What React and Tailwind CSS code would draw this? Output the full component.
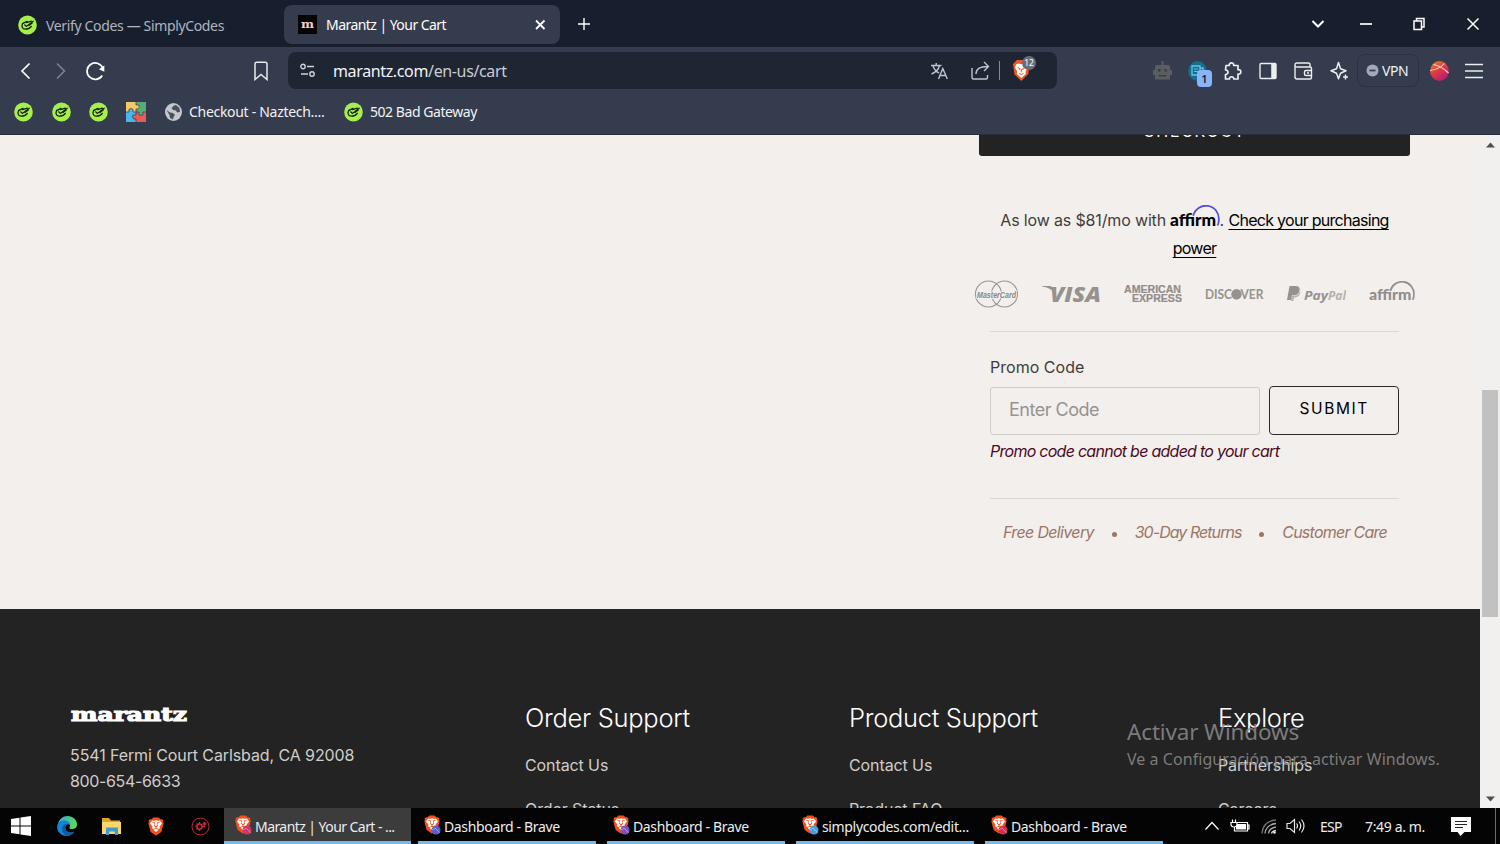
import React from 'react';
import { SiBrave } from 'react-icons/si';

const bookmarks = ['simplycodes-1', 'simplycodes-2', 'simplycodes-3'];

const tasks = [
  { title: 'Marantz | Your Cart - ...', dot: '#d6336c', active: true },
  { title: 'Dashboard - Brave', dot: '#5b5fc7' },
  { title: 'Dashboard - Brave', dot: '#8250c4' },
  { title: 'simplycodes.com/edit...', dot: '#4a9fe0' },
  { title: 'Dashboard - Brave', dot: '#d92c4f' },
];

const SimplyCodesIcon = () => (
  <svg className="w-[19px] h-5 shrink-0" viewBox="0 0 20 20" fill="none">
    <ellipse cx="10" cy="10" rx="9.8" ry="10" fill="#a6f04d" />
    <path d="M9.500 6.200 4.800 8.500c-1.500 3.800.2 6 3 5.900 3-.1 5-1 6.200-3" stroke="#16210c" strokeWidth="1.400" strokeLinecap="round" />
    <path d="m7 9.800 1.800 1.700L16 6M9 7.500l5-1.500M11.500 10.500l3.500-2.500" stroke="#16210c" strokeWidth="1.300" strokeLinecap="round" />
  </svg>
);

const BraveIcon = ({ dot }) => (
  <span className="relative block w-[18px] h-[19px] shrink-0">
    <svg className="absolute inset-0" width="18" height="19" viewBox="0 0 18 19">
      <path d="M4 3h10l1.500 4-1.500 7-5 4-5-4-1.500-7z" fill="#fff" />
    </svg>
    <SiBrave className="absolute inset-0 w-[18px] h-[19px] text-[#f4501e]" />
    {dot && (
      <svg className="absolute left-[8px] top-[10px]" width="10" height="10" viewBox="0 0 10 10">
        <circle cx="5" cy="5" r="4.500" fill={dot} />
        <path d="m1 5 3-2 5 5" stroke="#fff" strokeOpacity=".5" strokeWidth=".8" fill="none" />
      </svg>
    )}
  </span>
);

const AffirmLogo = ({ className, color, arc }) => (
  <svg className={className} viewBox="0 0 50 26">
    <text x="0" y="21" fontFamily="Lato" fontWeight="900" fontSize="17" textLength="46" lengthAdjust="spacingAndGlyphs" fill={color}>affirm</text>
    <path d="M23.200 10.800A13 13 0 0 1 48.800 15q0 3.500-1.300 5.500" fill="none" stroke={arc} strokeWidth="1.800" />
  </svg>
);

const TabStrip = () => (
  <div className="h-[47px] bg-[#171f2f] flex items-center text-[#fff]">
    <div className="flex items-center w-[284px] pl-[18px] pt-[3px] gap-[9px]">
      <SimplyCodesIcon />
      <span className="text-[14px] tracking-[-0.35px] text-[#b0b5be]">Verify Codes — SimplyCodes</span>
    </div>
    <div className="flex items-center w-[276px] h-[39px] mt-px rounded-lg bg-[#343c4d] pl-3.5 pr-[13px]">
      <svg className="w-[19px] h-[19px]" viewBox="0 0 19 19">
        <rect width="19" height="19" fill="#050303" />
        <text x="9.500" y="13" textAnchor="middle" fontFamily="DejaVu Serif" fontWeight="700" fontSize="11" textLength="13" lengthAdjust="spacingAndGlyphs" fill="#eed4c8">m</text>
      </svg>
      <span className="ml-[9px] mt-px text-[14px] tracking-[-0.55px]">Marantz | Your Cart</span>
      <svg className="ml-auto" width="13" height="13" viewBox="0 0 13 13" stroke="#fff" strokeWidth="1.800"><path d="m2 2.500 8.500 8.500m0-8.500L2 11" /></svg>
    </div>
    <svg className="ml-[17px]" width="14" height="14" viewBox="0 0 14 14" stroke="#fff" strokeWidth="1.400"><path d="M7 1v12M1 7h12" /></svg>
    <div className="ml-auto flex items-center">
      <svg width="14" height="10" viewBox="0 0 14 10" stroke="#fff" strokeWidth="2" fill="none"><path d="m1.500 2 5.500 5.500L12.500 2" /></svg>
      <svg className="ml-[34px]" width="14" height="10" viewBox="0 0 14 10" stroke="#fff" strokeWidth="1.700"><path d="M1 5h12" /></svg>
      <svg className="ml-[39px]" width="14" height="14" viewBox="0 0 14 14" stroke="#fff" strokeWidth="1.500" fill="none"><path d="M2 4h7.500v8.500H2zM4.500 3.800V1.500H12V10H9.800" /></svg>
      <svg className="ml-[40px] mr-5" width="14" height="14" viewBox="0 0 14 14" stroke="#fff" strokeWidth="1.500"><path d="m1.500 1.500 11 11m0-11-11 11" /></svg>
    </div>
  </div>
);

const AddressBar = () => (
  <div className="flex items-center w-[769px] h-[37px] ml-[20px] rounded-lg bg-[#1e2533] text-[#c9cdd4]">
    <svg className="ml-3" width="15" height="15" viewBox="0 0 15 15" fill="none" stroke="#cfd3da" strokeWidth="1.400">
      <circle cx="3" cy="3.500" r="2.200" /><path d="M7 3.500h7M1 11h7" /><circle cx="12" cy="11" r="2.200" />
    </svg>
    <span className="ml-[18px] text-base tracking-[-0.36px]"><span className="text-[#f3f4f6]">marantz.com</span>/en-us/cart</span>
    <svg className="ml-auto" width="19" height="18" viewBox="0 0 19 18" fill="none" stroke="#c0c5cd" strokeWidth="1.400">
      <path d="M1 3.500h10.500M6.200 1v2.500M3 3.500c1 4 3 6 6 7.500M9.500 3.500C8.500 8 5 10.500 1.500 12M8.500 17l4.300-10.500L17.300 17M10 13.500h5.800" />
    </svg>
    <svg className="ml-[22px]" width="19" height="19" viewBox="0 0 19 19" fill="none" stroke="#c0c5cd" strokeWidth="1.400">
      <path d="M1 7v9.500q0 1.500 1.500 1.500H15q1.500 0 1.500-1.500V14M5 13c0-5 3.500-7.500 12-7.500M13 1l4.500 4.500L13 10" />
    </svg>
    <span className="w-px h-[19px] ml-[9px] bg-[#858a94]" />
    <span className="relative ml-[12px] mr-[25px]">
      <svg width="20" height="23" viewBox="0 0 20 23">
        <path d="M5 1h8l4.500 4-1.200 10L9.300 22 2.500 15.500 1 5z" fill="#f4561f" />
        <path d="m4 5.500 2.500-1 2.800.8 2.800-.8 2.600 1 1 3-2 3.500v3l-4.400 4L5 15v-3L3 8.500z" fill="#fff" />
        <path d="m5.500 8.500 2.500 1-.5 1.500M13.200 8.500l-2.500 1 .5 1.500M7 14.500l2.300 1 2.300-1M9.300 10v3.500" stroke="#e8582a" strokeWidth="1" fill="none" />
      </svg>
      <span className="absolute -top-[3px] left-[10px] w-[14px] h-[14px] rounded-full bg-[#686d79] text-[#fff] text-[8.500px] leading-[14px] text-center">12</span>
    </span>
  </div>
);

const Toolbar = () => (
  <div className="h-[47px] flex items-center bg-[#343c4d]">
    <svg className="ml-[20px]" width="12" height="18" viewBox="0 0 12 18" fill="none" stroke="#fff" strokeWidth="1.700"><path d="M9.500 1.500 2 9l7.500 7.500" /></svg>
    <svg className="ml-[23px]" width="12" height="18" viewBox="0 0 12 18" fill="none" stroke="#7d8491" strokeWidth="1.600"><path d="M2 1.500 9.500 9 2 16.500" /></svg>
    <svg className="ml-[18px]" width="21" height="20" viewBox="0 0 21 20" fill="none" stroke="#fff" strokeWidth="1.700">
      <path d="M17.200 14.500A8.200 8.200 0 1 1 18 7.500" /><path d="M14 8.300 19.300 4.500v6.200z" fill="#fff" stroke="none" />
    </svg>
    <svg className="ml-[148px]" width="14" height="20" viewBox="0 0 14 20" fill="none" stroke="#e8eaed" strokeWidth="1.500"><path d="M1 3q0-1.800 1.800-1.800h8.400Q13 1.200 13 3v15.500l-6-5-6 5z" /></svg>
    <AddressBar />
    <svg className="ml-[95px]" width="21" height="21" viewBox="0 0 21 21" fill="#5b5d60">
      <path d="M9.500 1h2v4H16q2 0 2 2v3h2v5h-2v4.500H3V15H1v-5h2V7q0-2 2-2h4.500z" />
      <path d="M6 9h2.500v2.500H6zM12.500 9H15v2.500h-2.500zM6.500 15h8v1.500h-8z" fill="#343c4d" />
    </svg>
    <span className="relative ml-[15px] w-[26px]">
      <svg width="19" height="20" viewBox="0 0 19 20">
        <ellipse cx="9.500" cy="10" rx="9.300" ry="10" fill="#156d92" />
        <path d="M4 5h8v9H4zM12 7h3v6" fill="none" stroke="#64c6dd" strokeWidth="1.300" /><path d="M6 8h4M6 10.500h4" stroke="#64c6dd" />
      </svg>
      <span className="absolute left-[9px] top-[9px] w-[15px] h-[17px] rounded bg-[#8ab4f8] text-[#17202e] text-[11px] font-semibold leading-[18px] text-center">1</span>
    </span>
    <svg className="ml-[9px]" width="19" height="20" viewBox="0 0 19 20" fill="none" stroke="#eceef1" strokeWidth="1.700" strokeLinejoin="round">
      <path d="M3 4.500h3.300C5.500 1 11.500 1 10.700 4.500H15v4.200c3.800-.6 3.800 5 0 4.400V18h-4.200c.2-3-4.600-3-4.400 0H2.500v-4.500c3.300 0 3.300-4.600 0-4.500z" />
    </svg>
    <svg className="ml-[17px]" width="18" height="18" viewBox="0 0 18 18" fill="none" stroke="#eceef1" strokeWidth="1.400"><rect x="1" y="1.500" width="16" height="15" rx="1" /><path d="M12.200 2H17v14h-4.800z" fill="#eceef1" stroke="none" /></svg>
    <svg className="ml-[17px]" width="19" height="18" viewBox="0 0 19 18" fill="none" stroke="#eceef1" strokeWidth="1.400"><path d="M16 5V2.500Q16 1 14.500 1H3Q1 1 1 3v12q0 2 2 2h13q1.500 0 1.500-1.500v-9Q17.500 5 16 5H3Q1.200 5 1 3.500M17.500 8.500H12q-1.500 0-1.500 1.500v2q0 1.500 1.500 1.500h5.500M13 11h2" /></svg>
    <svg className="ml-[17px]" width="19" height="20" viewBox="0 0 19 20" fill="none" stroke="#eceef1" strokeWidth="1.500" strokeLinejoin="round"><path d="M8.500 1.500 10.500 7.700l5.500 2-5.500 2.500-2 5.600-2-5.600L1 9.700l5.500-2z" /><path d="M15.500 13.500v5M13 16h5" /></svg>
    <div className="ml-[8px] w-[62px] h-[33px] flex items-center rounded-lg border border-[#2a3140] pl-2 text-[14px] text-[#f0f1f4]">
      <svg width="13" height="13" viewBox="0 0 13 13"><circle cx="6.500" cy="6.500" r="6" fill="#a2a9b8" /><path d="M3.500 6.500h6" stroke="#343c4d" strokeWidth="1.700" /></svg>
      <span className="ml-[3px] tracking-[-0.4px]">VPN</span>
    </div>
    <svg className="ml-[11px]" width="19" height="20" viewBox="0 0 19 20">
      <defs><linearGradient id="avatar" x1="0" y1="0" x2=".7" y2="1"><stop offset="0" stopColor="#f08a24" /><stop offset=".5" stopColor="#e23b40" /><stop offset="1" stopColor="#b31a78" /></linearGradient></defs>
      <ellipse cx="9.500" cy="10" rx="9.400" ry="10" fill="url(#avatar)" />
      <path d="M0 9.500Q9 8.500 14.500 2.500M3.500 3.500Q12 5.500 18.500 12" stroke="#f4d5d5" strokeWidth="1.100" fill="none" />
    </svg>
    <svg className="ml-[16px]" width="18" height="16" viewBox="0 0 18 16" stroke="#eceef1" strokeWidth="1.700"><path d="M0 1.500h18M0 8h18M0 14.500h18" /></svg>
  </div>
);

const BookmarksBar = () => (
  <div className="h-[41px] pb-[5px] pl-[14px] flex items-center bg-[#343c4d] text-[14px] text-[#f2f3f5] border-b border-[#272d39] whitespace-nowrap">
    <div className="flex gap-[18.500px]">
      {bookmarks.map((b) => <SimplyCodesIcon key={b} />)}
    </div>
    <svg className="ml-[18px]" width="20" height="20" viewBox="0 0 20 20">
      <path d="M0 0h10v10H0z" fill="#f4c86a" /><path d="M10 0h10v10H10z" fill="#53ae7c" />
      <path d="M0 10h10v10H0z" fill="#48b8f0" /><path d="M10 10h10v10H10z" fill="#e75b5b" />
      <circle cx="11" cy="5" r="2.300" fill="#f4c86a" /><circle cx="15" cy="11" r="2.300" fill="#53ae7c" />
      <circle cx="5" cy="9" r="2.300" fill="#48b8f0" /><circle cx="9" cy="15" r="2.300" fill="#e75b5b" />
      <path d="M10 0v3q4-1 3 2.500Q12 8 10 7v3H7Q8 6.500 5 6.500T3 10H0M10 10h3q-1 3.500 2 3.500T17 10h3M10 10v3q-4-1-3.500 2T10 17v3" fill="none" stroke="#3d4047" strokeWidth=".8" />
    </svg>
    <svg className="ml-[19px]" width="17" height="18" viewBox="0 0 17 18">
      <ellipse cx="8.500" cy="9" rx="8.500" ry="9" fill="#c5c8ce" />
      <path d="M9 2.500 6.500 5l1.500 2 3 .5 1 2 3-.5-.5-4L11 2zM1.500 7 5 9.500l3 .5 2 2-1.500 2-.5 2.500-3-1.500-.5-3z" fill="#4a505c" />
    </svg>
    <span className="ml-[7px] w-[137px] tracking-[-0.3px]">Checkout - Naztech....</span>
    <span className="ml-[18px]"><SimplyCodesIcon /></span>
    <span className="ml-[7px] tracking-[-0.45px]">502 Bad Gateway</span>
  </div>
);

const PaymentLogos = () => (
  <div className="w-[440px] -ml-[4px] h-[30px] flex items-center justify-between">
    <svg width="43" height="28" viewBox="0 0 43 28" fill="none" stroke="#999592" strokeWidth="1.100">
      <circle cx="13.500" cy="14" r="13" /><circle cx="29.500" cy="14" r="13" />
      <text x="2" y="17.500" stroke="#f3efec" strokeWidth="2" paintOrder="stroke" fill="#8b8784" fontFamily="Liberation Sans" fontStyle="italic" fontWeight="700" fontSize="9.500" textLength="39" lengthAdjust="spacingAndGlyphs">MasterCard</text>
    </svg>
    <svg className="ml-px" width="59" height="18" viewBox="0 0 59 18" fill="#96928f">
      <path d="M0 1h8q2 0 2.500 2l1.500 5Q9 2.800 0 1.600z" />
      <text x="8" y="16.500" fontFamily="Open Sans" fontStyle="italic" fontWeight="800" fontSize="21.500" textLength="51" lengthAdjust="spacingAndGlyphs">VISA</text>
    </svg>
    <svg width="59" height="18" viewBox="0 0 59 18" fill="#918d8a" stroke="#918d8a" strokeWidth=".2" fontFamily="Liberation Sans" fontWeight="700" fontSize="10">
      <text x="0" y="8" textLength="57" lengthAdjust="spacingAndGlyphs">AMERICAN</text>
      <text x="8" y="16.500" textLength="50" lengthAdjust="spacingAndGlyphs">EXPRESS</text>
    </svg>
    <svg width="59" height="14" viewBox="0 0 59 14" fill="#96928f" fontFamily="Lato" fontWeight="700" fontSize="13.500">
      <text x="0" y="12" textLength="27" lengthAdjust="spacingAndGlyphs">DISC</text>
      <circle cx="31.500" cy="7.200" r="5.200" />
      <text x="35.500" y="12" textLength="23" lengthAdjust="spacingAndGlyphs">VER</text>
    </svg>
    <svg width="59" height="18" viewBox="0 0 59 18" fill="#96928f" fontFamily="Open Sans" fontStyle="italic" fontWeight="700" fontSize="12">
      <path d="M2.500 1h6q5 0 4 4.500T7.500 10H5l-1 5H0z" /><path d="m4 16 1.200-5.500h2.500q5 0 5.500-6 1 7.500-5.200 8H7L6.300 16z" opacity=".65" />
      <text x="17" y="14.500" textLength="24" lengthAdjust="spacingAndGlyphs">Pay</text>
      <text x="41" y="14.500" textLength="18" lengthAdjust="spacingAndGlyphs" opacity=".65">Pal</text>
    </svg>
    <AffirmLogo className="w-[46px] h-[24px] -mt-[3px]" color="#918d8a" arc="#918d8a" />
  </div>
);

const CartSummary = () => (
  <div className="ml-[979px] w-[431px] text-[#3f3d3c]">
    <div className="-mt-[29px] h-[50px] rounded-[3px] bg-[#232323] text-white text-base tracking-[1.700px] flex items-center justify-center">CHECKOUT</div>
    <p className="mt-[50px] h-[56px] text-center text-base leading-[28px]">
      <span className="tracking-[-0.150px]">As low as $81/mo with </span>
      <AffirmLogo className="inline-block align-baseline w-[50px] h-[26px] -mb-[5px] -mt-3" color="#000" arc="#5553d9" />
      <span className="-ml-px">. </span><a className="text-black underline underline-offset-[3px] decoration-1 tracking-[-0.720px]">Check your purchasing<br />power</a>
    </p>
    <div className="mt-[17px]"><PaymentLogos /></div>
    <div className="mx-[11px] mt-[22px] border-t border-[#dcd8d5]">
      <label className="block mt-[23px] h-6 leading-6 text-base tracking-[0.030px]">Promo Code</label>
      <div className="mt-[7px] flex items-center gap-[9px]">
        <div className="w-[271px] h-[48px] rounded-[3px] border border-[#d0ccc9] pl-[18px] leading-[44px] text-[18px] tracking-[-0.5px] text-[#979390]">Enter Code</div>
        <button className="w-[130px] h-[49px] pb-[3px] rounded border border-[#2b2b2b] text-[15.500px] tracking-[1.600px] text-black">SUBMIT</button>
      </div>
      <p className="mt-[4px] leading-6 text-base italic tracking-[-0.73px] text-[#4b0a26]">Promo code cannot be added to your cart</p>
    </div>
    <div className="mx-[11px] mt-[35px] border-t border-[#dcd8d5] pt-[21px] pl-[13px] pr-[12px] flex items-center justify-between leading-6 text-base italic tracking-[-0.75px] text-[#9b7566]">
      <span className="tracking-[-0.650px]">Free Delivery</span>
      <span className="size-[5px] mt-1 rounded-full bg-[#9b7566]" />
      <span className="tracking-[-0.950px]">30-Day Returns</span>
      <span className="size-[5px] mt-1 rounded-full bg-[#9b7566]" />
      <span>Customer Care</span>
    </div>
  </div>
);

const FooterColumn = ({ title, links, className }) => (
  <div className={className}>
    <h3 className="text-[25.500px] leading-8 font-light tracking-[-0.300px] text-[#fff]">{title}</h3>
    <ul className="mt-[19px] text-base tracking-[-0.1px] text-[#d0cdca]">
      {links.map((link) => <li key={link} className="h-[44px] leading-6">{link}</li>)}
    </ul>
  </div>
);

const Footer = () => (
  <footer className="h-[199px] bg-[#232323] pl-[70px] pt-[93px] flex overflow-hidden">
    <div className="w-[455px] shrink-0 text-[#d0cdca]">
      <svg className="mt-[5px]" width="119" height="18" viewBox="0 0 119 18">
        <text x="1" y="14" fontFamily="DejaVu Serif" fontWeight="700" fontSize="18" stroke="#fff" strokeWidth="1.100" fill="#fff" textLength="116" lengthAdjust="spacingAndGlyphs">marantz</text>
      </svg>
      <p className="mt-[17px] text-base leading-[26px] tracking-[-0.1px]">5541 Fermi Court Carlsbad, CA 92008<br /><span className="tracking-[-0.350px]">800-654-6633</span></p>
    </div>
    <FooterColumn className="w-[324px] shrink-0" title="Order Support" links={['Contact Us', 'Order Status']} />
    <FooterColumn className="w-[369px] shrink-0" title="Product Support" links={['Contact Us', 'Product FAQ']} />
    <FooterColumn className="shrink-0" title="Explore" links={['Partnerships', 'Careers']} />
  </footer>
);

const ScrollBar = () => (
  <div className="w-[20px] flex flex-col items-center bg-[#f1f0ef]">
    <svg className="mt-[7px]" width="9" height="6" viewBox="0 0 9 6"><path d="M0 5.500 4.500.5 9 5.500z" fill="#505050" /></svg>
    <div className="mt-[242px] w-4 h-[227px] bg-[#c1c1c1]" />
    <svg className="mt-auto mb-[6px]" width="9" height="6" viewBox="0 0 9 6"><path d="M0 .5h9L4.500 5.500z" fill="#505050" /></svg>
  </div>
);

const Taskbar = () => (
  <div className="relative z-10 h-[36px] flex items-center bg-[#040404] text-[#ededed] text-[14px]">
    <svg className="ml-[11px]" width="20" height="20" viewBox="0 0 20 20" fill="#fff"><path d="m0 3 8.500-1.200v7.700H0zM9.500 1.600 20 0v9.500H9.500zM0 10.500h8.500v7.700L0 17zM9.500 10.500H20V20l-10.500-1.600z" /></svg>
    <svg className="ml-[26px]" width="20" height="20" viewBox="0 0 20 20">
      <defs>
        <linearGradient id="edgeTop" x1="0" y1="0" x2="1" y2=".3"><stop offset="0" stopColor="#2aa8e8" /><stop offset="1" stopColor="#62d65b" /></linearGradient>
      </defs>
      <path d="M1 8C2 3 6 0 10.500 0 16 0 20 4 20 8.500c0 3-2 4.500-5 4.500-2 0-3-.8-2.500-1.800.7-1 .8-2.600-.3-4C9 3.500 3.500 4.500 1 8z" fill="url(#edgeTop)" />
      <path d="M.1 10C1 6 4.500 4.300 8 4.500c3 .2 5 2.200 5 4.500C10 7 7.500 10 8.500 13s5 4.500 9 2.500C15 19 12 20 9.500 20 4 20-.3 15.500.1 10z" fill="#1783d8" />
      <path d="M5.800 10c-1.500 4 0 8.500 4.500 9.900 3-.3 5.500-2 7.200-4.400-4 2-8.500.5-9-2.500C8 10.500 9 9 10 8.500 8.500 8 6.500 8.500 5.800 10z" fill="#1258a5" />
    </svg>
    <svg className="ml-[25px]" width="19" height="17" viewBox="0 0 19 17"><path d="M0 0h7l2 2.500h9V16H0z" fill="#e0a42d" /><path d="M0 4h19v12H0z" fill="#fbd668" /><path d="M4 17V9.500h12V17h-3.200v-3.500H7.200V17z" fill="#4297cf" /></svg>
    <span className="ml-[26px]"><BraveIcon /></span>
    <svg className="ml-[26px]" width="19" height="19" viewBox="0 0 19 19" fill="none" stroke="#c52a36" strokeWidth="1"><circle cx="9.500" cy="9.500" r="8.500" /><circle cx="8.500" cy="9.500" r="2.600" strokeWidth="1.500" /><path d="M8.500 5v2M8.500 12v2M4.500 9.500h1.500M5.500 6.500l1 1M5.500 12.500l1-1M11 9.500h2.500V6M11.800 7.500l1.700-2 1.700 2" strokeWidth="1.300" /></svg>
    <div className="ml-[14px] h-full flex gap-[11px]">
      {tasks.map((task, i) => (
        <div
          key={i}
          className={
            task.active
              ? 'w-[187px] -mr-[4px] h-full flex items-center pl-[10px] bg-[#3c3c3c] border-b-[3px] border-[#76b9ed] whitespace-nowrap tracking-[-0.560px]'
              : 'w-[178px] h-full flex items-center pl-[5px] border-b-[3px] border-[#76b9ed] whitespace-nowrap tracking-[-0.350px]'
          }
        >
          <BraveIcon dot={task.dot} />
          <span className="ml-[3px] mt-[3px]">{task.title}</span>
        </div>
      ))}
    </div>
    <svg className="ml-[41px]" width="16" height="10" viewBox="0 0 16 10" fill="none" stroke="#fff" strokeWidth="1.200"><path d="m1.500 8.500 6.500-7 6.500 7" /></svg>
    <svg className="ml-[10px]" width="20" height="15" viewBox="0 0 20 15" fill="none" stroke="#fff" strokeWidth="1.200"><path d="M6 3.500h11.500v8.500H4.500V8M17.500 6H19v4h-1.500" /><path d="M7 5h9v5.500H6V7z" fill="#fff" stroke="none" /><path d="M1 3.500h6V6Q6.500 8 4 8T1 6zM2.500 3.500v-3M5.500 3.500v-3" /></svg>
    <svg className="ml-[11px]" width="16" height="15" viewBox="0 0 16 15" fill="none" strokeWidth="1.300"><path d="M1 14.500Q2 2 15 1" stroke="#777" /><path d="M4 14.500Q5 5.500 15 4.500M7.500 14.500Q8 9 15 8" stroke="#aaa" /><path d="M10.500 14.500Q11 12 15 11.500" stroke="#ddd" /><circle cx="13.500" cy="13.500" r="1.200" fill="#fff" /></svg>
    <svg className="ml-[9px]" width="19" height="16" viewBox="0 0 19 16" fill="none" stroke="#e5e5e5" strokeWidth="1.200"><path d="M1 5.500h3L8.500 1.500v13L4 10.500H1zM10.500 5.500q2 2.500 0 5M13 3.500q3.500 4.500 0 9M15.500 1.500q5 6.500 0 13" /></svg>
    <span className="ml-[15px] w-[25px] tracking-[-0.7px]">ESP</span>
    <span className="ml-[20px] w-[61px] whitespace-nowrap tracking-[-0.35px]">7:49 a. m.</span>
    <svg className="ml-[25px]" width="20" height="19" viewBox="0 0 20 19"><path d="M0 0h20v15h-6.500L9.500 19 6.500 15H0z" fill="#fff" /><path d="M4 4.500h12M4 7.500h12M4 10.500h8" stroke="#222" strokeWidth="1.100" /></svg>
    <span className="ml-auto mr-[4px] w-px h-full bg-[#6a6a6a]" />
  </div>
);

const App = () => {
  return (
    <div className="relative w-[1500px] h-[844px] overflow-hidden flex flex-col font-['Noto_Sans',sans-serif]">
      <TabStrip />
      <Toolbar />
      <BookmarksBar />
      <div className="flex h-[673px] overflow-hidden font-['Inter',sans-serif]">
        <main className="w-[1480px] overflow-hidden bg-[#f3efec]">
          <div className="h-[474px] flow-root"><CartSummary /></div>
          <Footer />
        </main>
        <ScrollBar />
      </div>
      <Taskbar />
      {/* Windows activation watermark, floats over the page */}
      <div className="absolute left-[1127px] top-[717px] text-[#8d8d8d]/85 whitespace-nowrap">
        <p className="text-[22.500px] leading-[30px] tracking-[-0.150px]">Activar Windows</p>
        <p className="text-[16px] leading-[25px] tracking-[0.050px]">Ve a Configuración para activar Windows.</p>
      </div>
    </div>
  );
};

export default App;
